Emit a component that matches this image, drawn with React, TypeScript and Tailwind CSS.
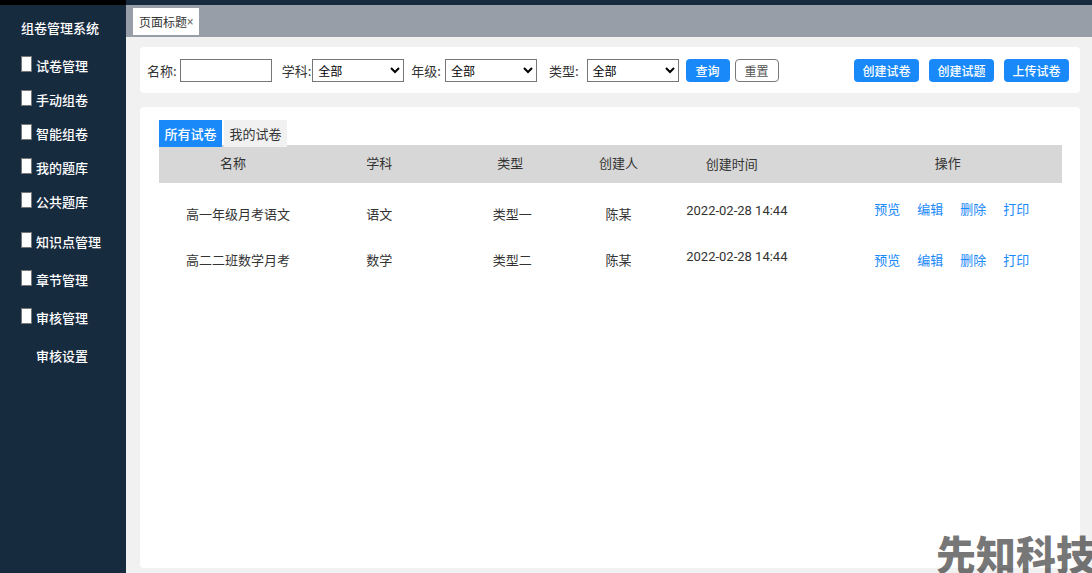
import { useState } from "react";

const examMenu = ["试卷管理", "手动组卷", "智能组卷", "我的题库", "公共题库"];
const systemMenu = ["知识点管理", "章节管理", "审核管理"];

const filters = [
  { id: "subject", label: "学科:", className: "ml-[10px] gap-px" },
  { id: "grade", label: "年级:", className: "ml-[7px] gap-1" },
  { id: "type", label: "类型:", className: "ml-3 gap-2" },
];

const createActions = ["创建试卷", "创建试题", "上传试卷"];

const tabs = ["所有试卷", "我的试卷"];

const rows = [
  {
    name: "高一年级月考语文",
    subject: "语文",
    type: "类型一",
    creator: "陈某",
    createdAt: "2022-02-28 14:44",
    height: "h-[62px]",
    linkCell: "pb-[10px]",
  },
  {
    name: "高二二班数学月考",
    subject: "数学",
    type: "类型二",
    creator: "陈某",
    createdAt: "2022-02-28 14:44",
    height: "h-[30px]",
    linkCell: "",
  },
];

const rowActions = ["预览", "编辑", "删除", "打印"];

function MenuItem({ label }: { label: string }) {
  return (
    <li>
      <a href="#" className="flex h-5 items-start gap-1 leading-5">
        <span className="h-4 w-[11px] shrink-0 border border-[#767676] bg-white" />
        {label}
      </a>
    </li>
  );
}

function Sidebar() {
  return (
    <aside className="w-[126px] shrink-0 border-t-[5px] border-black bg-[#172b3f] pl-[21px] font-medium text-white">
      <h1 className="mt-[13px] leading-5">组卷管理系统</h1>
      <nav>
        <ul className="mt-[18px] flex flex-col gap-[14px]">
          {examMenu.map((label) => (
            <MenuItem key={label} label={label} />
          ))}
        </ul>
        <ul className="mt-5 flex flex-col gap-[18px]">
          {systemMenu.map((label) => (
            <MenuItem key={label} label={label} />
          ))}
          <li className="pl-[15px] leading-5">
            <a href="#">审核设置</a>
          </li>
        </ul>
      </nav>
    </aside>
  );
}

function FilterBar() {
  return (
    <form
      className="flex items-center rounded bg-white px-[7px] pt-3 pb-[11px]"
      onSubmit={(e) => e.preventDefault()}
    >
      <div className="flex items-center gap-[3px]">
        <label htmlFor="name">名称:</label>
        <input id="name" type="text" className="h-[23px] w-[92px] border border-[#767676] px-1 text-xs" />
      </div>
      {filters.map((filter) => (
        <div key={filter.id} className={`flex items-center ${filter.className}`}>
          <label htmlFor={filter.id}>{filter.label}</label>
          <select
            id={filter.id}
            className="h-[23px] w-[92px] border border-[#767676] bg-white px-px text-xs text-black"
          >
            <option>全部</option>
          </select>
        </div>
      ))}
      <button type="submit" className="ml-[7px] h-[23px] w-11 rounded bg-[#1989fa] text-xs font-medium text-white">
        查询
      </button>
      <button type="reset" className="ml-[5px] h-[23px] w-11 rounded border border-[#797979] text-xs text-[#555]">
        重置
      </button>
      <div className="ml-auto flex gap-[10px] pr-1">
        {createActions.map((action) => (
          <button
            key={action}
            type="button"
            className="h-[23px] w-[65px] rounded bg-[#1989fa] text-xs font-medium text-white"
          >
            {action}
          </button>
        ))}
      </div>
    </form>
  );
}

function PaperTable() {
  return (
    <table className="w-full table-fixed text-center leading-5">
      <colgroup>
        <col className="w-[16.4%]" />
        <col className="w-[16%]" />
        <col className="w-[13%]" />
        <col className="w-[11%]" />
        <col className="w-[15.2%]" />
        <col />
      </colgroup>
      <thead className="bg-[#d7d7d7]">
        <tr className="h-[38px]">
          <th className="pb-[2px] font-normal">名称</th>
          <th className="pb-[2px] font-normal">学科</th>
          <th className="pb-[2px] font-normal">类型</th>
          <th className="pb-[2px] font-normal">创建人</th>
          <th className="pr-[10px] font-normal">创建时间</th>
          <th className="pb-[2px] pl-7 font-normal">操作</th>
        </tr>
      </thead>
      <tbody>
        {rows.map((row) => (
          <tr key={row.name} className={row.height}>
            <td className="pl-[10px]">{row.name}</td>
            <td>{row.subject}</td>
            <td className="pl-1">{row.type}</td>
            <td>{row.creator}</td>
            <td className="pb-[6px] font-[Roboto,sans-serif]">{row.createdAt}</td>
            <td className={`pl-9 ${row.linkCell}`}>
              <div className="flex justify-center gap-[17px]">
                {rowActions.map((action) => (
                  <a key={action} href="#" className="text-[#1989fa]">
                    {action}
                  </a>
                ))}
              </div>
            </td>
          </tr>
        ))}
      </tbody>
    </table>
  );
}

export default function App() {
  const [activeTab, setActiveTab] = useState(tabs[0]);

  return (
    <div className="relative flex min-h-screen overflow-hidden bg-[#f1f1f1] font-['Noto_Sans_CJK_SC',sans-serif] text-[13px] text-[#333]">
      <Sidebar />

      <div className="flex min-w-0 flex-1 flex-col">
        {/* Open pages */}
        <div className="flex border-t-[5px] border-[#172b3f] bg-[#979ea7] px-[7px] pt-[3px] pb-[2px]">
          <div className="flex h-[27px] items-center bg-white px-[6px] text-xs">
            页面标题
            <button type="button" aria-label="关闭" className="font-[Roboto,sans-serif] text-xs text-[#777]">
              ×
            </button>
          </div>
        </div>

        <main className="flex flex-1 flex-col gap-[14px] pt-[10px] pr-3 pb-[5px] pl-[14px]">
          <FilterBar />

          <section className="flex-1 rounded bg-white pt-[13px] pr-[18px] pl-[19px]">
            <div className="relative z-10 -mb-[2px] flex gap-[2px]">
              {tabs.map((tab) => (
                <button
                  key={tab}
                  type="button"
                  onClick={() => setActiveTab(tab)}
                  className={`h-[27px] w-[63px] ${
                    tab === activeTab ? "bg-[#1989fa] font-medium text-white" : "bg-[#f1f1f1]"
                  }`}
                >
                  {tab}
                </button>
              ))}
            </div>
            <PaperTable />
          </section>
        </main>
      </div>

      {/* Watermark */}
      <div className="pointer-events-none absolute -right-1 bottom-0 z-20 text-[40px] leading-10 font-black whitespace-nowrap text-black/55">
        先知科技
      </div>
    </div>
  );
}
